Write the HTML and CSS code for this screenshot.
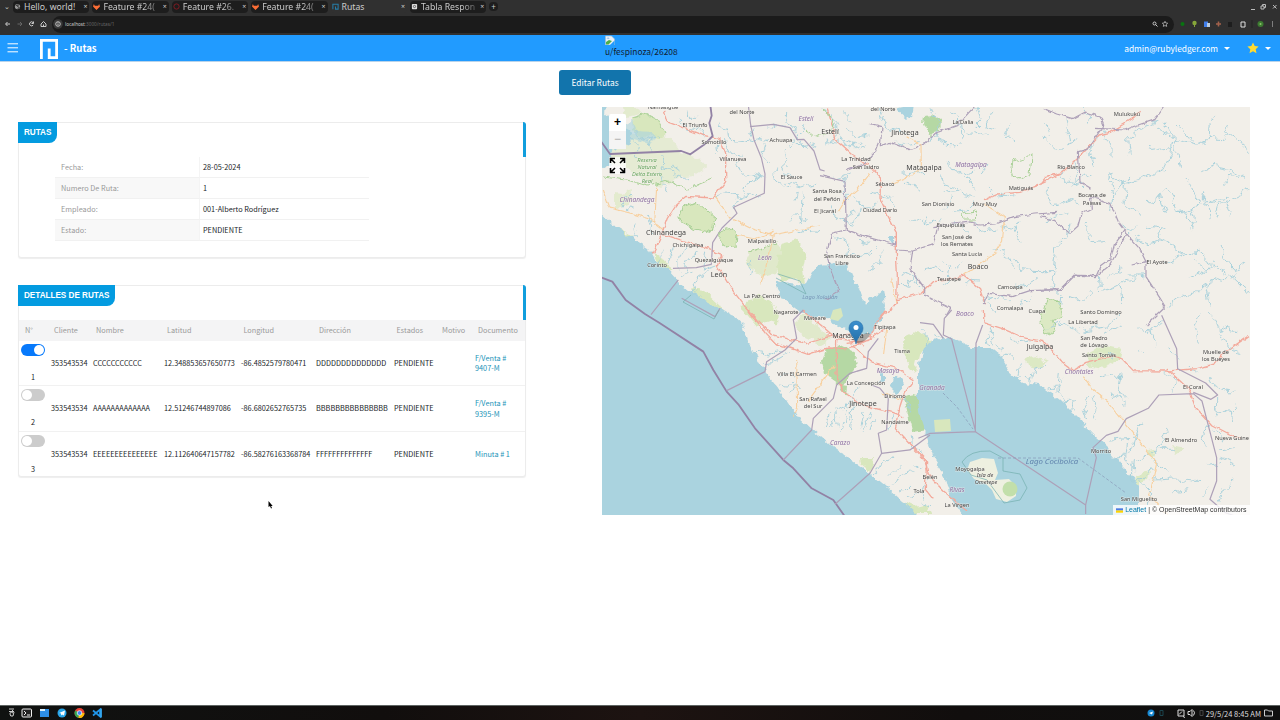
FILE: index.html
```html
<!DOCTYPE html>
<html lang="es">
<head>
<meta charset="utf-8">
<title>Rutas</title>
<link rel="stylesheet" href="styles.css">
</head>
<body>
<div class="tabs">
  <span class="tab-menu">⌄</span>
  <div class="tab"><svg class="fav" viewBox="0 0 8 8"><circle cx="4" cy="4" r="3" fill="#999"/><path d="M2 3l3-1-1 2 2 1-2 2" fill="none" stroke="#222"/></svg><b>Hello, world!</b><i>×</i></div>
  <div class="tab"><svg class="fav" viewBox="0 0 8 8"><path d="M1 1l1 2h4l1-2 1 3-4 4-4-4z" fill="#fc6d35"/></svg><b class="fade">Feature #24(</b><i>×</i></div>
  <div class="tab"><svg class="fav" viewBox="0 0 8 8"><circle cx="4" cy="4" r="3" fill="none" stroke="#8c1b24"/></svg><b class="fade">Feature #26.</b><i>×</i></div>
  <div class="tab"><svg class="fav" viewBox="0 0 8 8"><path d="M1 1l1 2h4l1-2 1 3-4 4-4-4z" fill="#fc6d35"/></svg><b class="fade">Feature #24(</b><i>×</i></div>
  <div class="tab active"><svg class="fav" viewBox="0 0 8 8"><path d="M1 7V1.500h6V7H4V4" fill="none" stroke="#267da8" stroke-width="1.200"/></svg><b>Rutas</b><i>×</i></div>
  <div class="tab"><svg class="fav" viewBox="0 0 8 8"><rect x="1" y="1" width="6" height="6" rx="1" fill="#ddd"/><circle cx="4" cy="4" r="1.300" fill="none" stroke="#555"/></svg><b class="fade">Tabla Respon</b><i>×</i></div>
  <span class="plus">+</span>
  <svg class="winctl" viewBox="0 0 30 8"><g fill="none" stroke="#bbb"><path d="M2 6.500h4M12 3h3v3h-3zM13.500 3V1.500h3v3H15M24 2l3.500 3.500M27.500 2L24 5.500"/></g></svg>
</div>
<div class="address">
  <svg class="navicons" viewBox="0 0 50 10"><g fill="none" stroke="#ccc"><path d="M10 5H6M7.500 3L5.500 5l2 2M33 3.500A2 2 0 1 0 33.200 6M33.500 2.500V4.500h-2"/><path d="M41 5l2.500-2.500L46 5v2.500h-5zM43.500 7.500V5.500"/><path stroke="#666" d="M17.500 5h4M20 3l2 2-2 2"/></g></svg>
  <div class="url"><svg viewBox="0 0 10 10"><circle cx="5" cy="5" r="4.800" fill="#3a3a3a"/><circle cx="5" cy="5" r="2.300" fill="none" stroke="#ddd" stroke-width=".8"/><path d="M5 4.500v2M5 3.300v.8" stroke="#ddd" stroke-width=".8"/></svg><span><em>localhost</em>:3000/rutas/1</span>
    <svg class="urlend" viewBox="0 0 18 8"><circle cx="4.500" cy="3.500" r="1.500" fill="none" stroke="#ccc"/><path d="M5.500 4.500L7.500 6.500" stroke="#ccc"/><path d="M15 1.300l.8 1.700 1.900.2-1.400 1.300.4 1.900L15 5.500l-1.700.9.400-1.900-1.400-1.300 1.900-.2z" fill="none" stroke="#ccc" stroke-width=".7"/></svg></div>
  <svg class="ext" viewBox="0 0 102 10"><circle cx="4.500" cy="5" r="2" fill="#087410"/><circle cx="16.500" cy="4" r="2.200" fill="#86a63a"/><path d="M16.500 5v3" stroke="#86a63a"/><path d="M26 2.500h4V8h-4z" fill="#3f7dea"/><path d="M29 4h3v4h-3z" fill="#bcd"/><path d="M38 5h5M40.500 2.500v5" stroke="#a2614b" stroke-width="1.600"/><path d="M50 3h4v5h-4z" fill="#1d1d1d"/><path d="M63 3h4v5h-4z" fill="none" stroke="#ddd"/><path d="M74 1v8" stroke="#222"/><circle cx="82.500" cy="5" r="3" fill="#3d7b31"/><circle cx="82.500" cy="5" r="1" fill="#8cc56a"/><path d="M94.500 2.500v1M94.500 4.500v1M94.500 6.500v1" stroke="#ccc"/></svg>
</div>
<header class="navbar">
  <svg class="burger" viewBox="0 0 12 10"><path d="M.5.800h10.500M.5 4.800h10.500M.5 8.800h10.500" stroke="#fff" stroke-width="1" fill="none"/></svg>
  <svg class="logo" viewBox="0 0 18 20"><path d="M1.400 20V1.400h15.200v17.200H9.200V9.500" fill="none" stroke="#fff" stroke-width="2.800"/></svg>
  <h1>- Rutas</h1>
  <div class="avatar"><svg viewBox="0 0 10 10"><path d="M.5 1h6l3 3v6h-9z" fill="#e8f0f8" stroke="#a9bcc9" stroke-width=".6"/><path d="M1 9.500V7l3-2 3 1-3.500 3.500z" fill="#4fae49"/><path d="M1.500 3.500q2-2 3 .5z" fill="#8cb9e8"/><path d="M5 10l4.500-4.500V10z" fill="#219bff"/></svg><span>u/fespinoza/26208</span></div>
  <div class="user"><span>admin@rubyledger.com</span><i class="caret"></i><svg class="star" viewBox="0 0 12 12"><path d="M6 .5l1.700 3.600 3.900.5-2.900 2.700.8 3.900L6 9.300l-3.500 1.900.8-3.900L.4 4.600l3.900-.5z" fill="#ffdb32"/></svg><i class="caret"></i></div>
</header>
<main class="page">
  <button class="edit">Editar Rutas</button>
  <div class="columns">
    <section class="left">
      <article class="card">
        <h2>RUTAS</h2><span class="accent"></span>
        <dl class="info">
          <dt>Fecha:</dt><dd>28-05-2024</dd>
          <dt>Numero De Ruta:</dt><dd>1</dd>
          <dt>Empleado:</dt><dd>001-Alberto Rodríguez</dd>
          <dt>Estado:</dt><dd>PENDIENTE</dd>
        </dl>
      </article>
      <article class="card details">
        <h2>DETALLES DE RUTAS</h2><span class="accent"></span>
        <div class="row head"><span>N°</span><span>Cliente</span><span>Nombre</span><span>Latitud</span><span>Longitud</span><span>Dirección</span><span>Estados</span><span>Motivo</span><span>Documento</span></div>
        <div class="row"><span class="num"><i class="switch on"></i>1</span><span>353543534</span><span>CCCCCCCCCCC</span><span>12.348853657650773</span><span>-86.4852579780471</span><span>DDDDDDDDDDDDDD</span><span>PENDIENTE</span><span></span><a>F/Venta #<br>9407-M</a></div>
        <div class="row"><span class="num"><i class="switch"></i>2</span><span>353543534</span><span>AAAAAAAAAAAAA</span><span>12.51246744897086</span><span>-86.6802652765735</span><span>BBBBBBBBBBBBBBB</span><span>PENDIENTE</span><span></span><a>F/Venta #<br>9395-M</a></div>
        <div class="row"><span class="num"><i class="switch"></i>3</span><span>353543534</span><span>EEEEEEEEEEEEEEE</span><span>12.112640647157782</span><span>-86.58276163368784</span><span>FFFFFFFFFFFFFF</span><span>PENDIENTE</span><span></span><a>Minuta # 1</a></div>
      </article>
    </section>
    <section class="map">
      <svg class="tiles" viewBox="602 107 647.5 408" preserveAspectRatio="none">
        <defs>
          <linearGradient id="pin" x2="0" y2="1"><stop stop-color="#3b8fce"/><stop offset="1" stop-color="#236da5"/></linearGradient>
          <filter id="meander" x="-5%" y="-5%" width="110%" height="110%" color-interpolation-filters="sRGB"><feTurbulence type="fractalNoise" baseFrequency=".035" numOctaves="3" seed="4"/><feDisplacementMap in="SourceGraphic" scale="34" xChannelSelector="R" yChannelSelector="G"/></filter>
          <filter id="bend" x="-5%" y="-5%" width="110%" height="110%" color-interpolation-filters="sRGB"><feTurbulence type="fractalNoise" baseFrequency=".05" numOctaves="2" seed="7"/><feDisplacementMap in="SourceGraphic" scale="14" xChannelSelector="R" yChannelSelector="G"/></filter>
          <filter id="coast" x="-5%" y="-5%" width="110%" height="110%" color-interpolation-filters="sRGB"><feTurbulence type="fractalNoise" baseFrequency=".12" numOctaves="3" seed="2"/><feDisplacementMap in="SourceGraphic" scale="8" xChannelSelector="R" yChannelSelector="G"/></filter>
        </defs>
        <rect x="602" y="107" width="648" height="408" fill="#f2efe9"/>
        <!-- woodland and reserves -->
        <g class="wood" filter="url(#coast)">
          <path d="M632 118l14-4 14 7 6 12-7 6-9-4-8 3-9-9z"/><path d="M603 142l26-5 18-10 10 9 14 2 10 15 18 5 8 10-14 8-20 3-12 8-16-7-20-12-22-5z" opacity=".5"/>
          <path d="M682 207l15-6 19 17-3 15-18-4-16-11z"/><path d="M719 232l12-3 7 6-1 10-11 1-7-6z"/>
          <path d="M749 252l18-6 10-4 5 14-6 18-13 3-14-9-5-6z" opacity=".7"/><path d="M782 244l16-4 8 14-3 14 2 18-12-8-13 3-3-14z"/>
          <path d="M925 116l9-2 7 6-1 12-12 2-4-10z" fill="#b5d8a4"/><path d="M614 193l10 1 8-3-2 12-16 6z" opacity=".6"/>
          <path d="M617 228l13 7 4 13-14-9zM653 254l13 6 5 10-12-3z"/><path d="M690 288l14 2 16 15 3 8-19-8zM738 306l12-6 10-6 19 19-1 12-13-4-8 6-12-15z"/>
          <path d="M797 317l9-2 17 16 9 9-9 5-19-9-8-10z" opacity=".7"/><path d="M826 349l15-4 16 8-1 14-14 19-17-12-3-12z" fill="#b5d8a4"/>
          <path d="M841 384l7 1-1 12-7-7zM904 397l11-2 13 4-2 31-14 2z" fill="#b5d8a4"/>
          <path d="M904 338l15-7 13 10-14 14-4 18-9-12z"/>
          <path d="M1046 298l12 4 5 14-11 5 4 9-10 5-6-14zM1025 359l12-3 11 6-8 7-12-2zM1088 353l16-8 17 4-2 10-16 10-16-3zM1135 477l15-6-2 10-12 3zM1148 450l6-1 3 5-6 3z" opacity=".85"/>
          <path d="M978 350l8-2 3 8-6 3zM1171 445l14 3-8 6z" opacity=".7"/><path d="M860 458h14l-3 14-10-8zM902 501l10 5 14-2 5 10h-20z"/>
          <path d="M623 107l13 0 6 7-17 3z" opacity=".6"/>
        </g>
        <g class="water" filter="url(#coast)">
          <path d="M598 211l15 14 17 12 17 10 8 15 12 7 13 14 20 15 20 10 12 7 11 10 5 17 14 23 11 17 12 15 15 21 12 11 16 14 19 14 23 16 17 14 30 28v10H590z"/>
          <path d="M598 100h9l-1 15 12 5 4 8 10 5-2 9-12 8-8-3 2 17-7 3-7-3z"/><path d="M622 126l10-5 5 10 16 1 4 6-11 5-12-4-7 3z" opacity=".6"/>
          <path d="M820 266l15-2 13 1 4 10 8 17 5 14 8-9 10-7 2 15-2 10-13 18-10 0-15-3-10-4-7-9-13 1-15-6-15-12-7-10-2-10 14 3 15 2 7-13z"/>
          <path d="M918 371l4-20 8-9 11-5 13 1 16 9 20 0 10 8 10 17 13 11 17 2 20 15 17 17 16 17 14 13 16 20 16 18v42H970l-20-30-5-20-12-20-7-23-6-18-2-12z"/>
          <path d="M903 103h11l-2 13-7 2-8-7zM893 379l7-2 5 5-2 8-6 3-6-6zM879 373l4 0 0 8-4 1zM889 236l6 0 0 7-6-2z"/>
        </g>
        <path d="M1139 482l8 4v29h-8z" fill="#f2efe9"/>
        <g class="wood"><path d="M833 310l8-2 2 8-5 5-8-2zM934 420l16-1 1 12-16 1z"/><path d="M970 462l12-4 12 1 4 14-3 7 14-1 7 7 0 10-9 6-11-3-4-9-6-6-12-5-7-9z" fill="#eef0e0"/><circle cx="1010" cy="489" r="7.500" fill="#c2dfaa"/></g>
        <!-- rivers -->
        <g class="river" filter="url(#meander)" transform="translate(600 105) scale(.3333)">
          <path d="M100 78l24 22 31-10 20 16M90 100l22 22-3 27 18 17M150 95l-8 29 14 16M185 160l6 30 29-12 21 15M188 205l-7 29 20 28M210 190l20 24 17 0M240 210l21 15M240 40l20 30 40 4 18 25M265 18l5 19 20 0M355 60l27 20 4 23 60 5 17-38M365 112l-17 10 2 24M372 108l20 38 30 5M408 162l15 49 32-2 39 9M440 110l42-10 25 8M492 115l-8 27 22 25M480 210l-43 33-12 35-52-8-22 6M428 277l33-10 24 16M427 280l-23 14-7 24M560 15l-2 40 30 21 4 32 31 19M505 60l50 8M583 108l-24 32 5 27-20 19 13 20 37 12M614 58l-22 48M530 190l-12 29 19 17 35 16M555 234l53 15 45-14M593 256l-8 34M580 120l45-4 28 14M570 350l20-24 20 30 12-23M605 355l4-86M660 380l-40-5-30 13M190 433l-10 31-21 17M220 427l-19 43M262 426l-29 47 2 23M297 440l-36 26-5 30M320 440l-10 56 39-14M330 500l-40 25-15 39 28 9M240 510l34-14M455 466l-10 44M90 270l-30 34M75 310l35 5M145 330l10 33-4 29M102 352l8 43"/>
          <path d="M680 25l33 32 13 45 42 12M718 82l-36 35M730 20l30 30M752 210l-40 12-15-17M795 130l-25-12M740 212l-5 48 14 24M820 265l32 7 41 25M875 280l-19-18M766 320l-34 18"/>
        </g>
        <g class="river" filter="url(#meander)" transform="translate(820 105) scale(.3333)">
          <path d="M15 10l25 31 11 35M20 105l45 5 35 18M75 60l31 38 39-10M178 13l22 61 58 10M230 105l30 15 45-4M330 13l30 44-16 37-19 12M345 92l35 29 35 2M395 15l27 39 4 44-13 25M426 70l42 19 35-6M470 10l14 37-20 20M520 12l-22 47 34 10M570 55l-13 37 25 22M380 170l35 40 45-11M365 212l6 25 38 10 20 25 38 7M370 265l42-6M389 278l-17 35M442 212l30 45M502 171l-18 39M510 256l25 17 45-7M400 320l35-5 25-25M458 350l25 30 46-8M400 345l38 31 5 34M245 205l44-5 26 12M260 235l34 8 14 20M270 340l45 16 44-14M312 358l10-28M100 280l42 28 30-14M125 305l-10 31-24 13M35 306l27 42 39 10M50 395l39 29-8 31M115 405l42 14M90 455l60-8 20-20M142 498l34-26 14-39M240 500l45 12 15 42M235 540l30 3 14-30M310 495l38-9 23 12M365 470l24 18-4 40-20 12M425 470l-26 26M430 530l50 4M545 365l40 10 12 35M520 430l34 10 27 45M600 350l-22 37M580 460l24 34 50 3M490 590l45-20 40 20M580 540l36 5 38-30M500 595l30 25M600 600l31-19"/>
        </g>
        <g class="river" filter="url(#meander)" transform="translate(1040 105) scale(.3333)">
          <path d="M5 95l35 33 40 5M18 60l10 35M78 40l12 80 30-20M130 15l20 24-12 22M165 95l-20 45 23 40M190 80l20 40 0 38M95 165l19 30-25 52M65 190l22 44 45 5M100 230l50-18M15 250l22 55 54-20M90 287l30 12M136 348l3 38 17 30 42-3M90 350l-7 44-35 30-9 66M15 360l25-30 42-11M265 155l-5-52 30-24 62-26M355 70l20 17 28 16 10 50 12 35M370 50l30 46-8 54-23 49-52 18-64 23M403 100l70 17 34-15 3-47 20-15M410 53l24 26 32 36M318 118l35 15 41-5M485 120l20-20 43 4 12-18 48 28 14 33M552 60l15 30M205 205l54 35-4 60 33 17 17 20M209 210l9 55-3 51M220 275l33-37 14-26M320 292l22 4 20-28 17-18 17 28 19 42 45-10 23-16 38-3 32 4 19-10 56-31M360 270l16 57M412 318l28 4 20 51M455 310l10 42-17 18M485 295l24 21-2 30M510 290l50-12M440 220l15 25 26 52M495 258l-6 32M484 200l35-16 48 10 53 24M620 220l-44-11-25 31M543 300l-12 38M558 290l16 45M322 360l40 12 14-8M370 370l-16 28 50 28 25 18 45-5 35 32 60 39 40 39 17 10M320 420l52-10M434 450l-59 23M550 420l0 35 30 36 41-13M440 520l64-20 15-19M510 500l-44-32M510 605l-8-48 6-38 45 10 33-29M260 510l59 0M175 515l3 35M180 560l36-11 50-25 57-14M270 380l-22-20M260 395l25-28M285 395l45 22M200 520l44-30M0 500l42 0-5 48 25 26-3 27M380 610l50-38 28-7 42-29M90 580l40 9 31-24M240 535l5 56"/>
        </g>
        <g class="river" filter="url(#meander)" transform="translate(600 310) scale(.3333)">
          <path d="M460 125l45 10 30-12 34 8M490 155l36-3 33-19M540 200l18-14 28 9M535 222l29 3 25-6M570 255l10-24 26 3M780 230l-33 50-35 20M690 300l-14 52M705 295l10 52M740 280l-14 80M760 270l-5 90M770 275l-26 58M790 300l-10 55M810 305l-20 60M690 360l27-40M820 330l-10 30M875 265l38-2 14 45M880 310l-20 55M825 490l29-39 30-11M870 500l40-40M885 530l14-33 44-12M940 465l22 10M970 430l-32-20-4-34M900 550l28-29M930 560l30-15"/>
        </g>
        <g class="river" filter="url(#meander)" transform="translate(920 310) scale(.3333)">
          <path d="M210 50l10 48 30 15M270 80l25 16 40-6M240 140l15-8 20 17M298 160l-7 38M310 195l31 15M335 215l10-39 30-10M380 235l36-5 15-27M415 190l-4 52M415 240l15 35 35-2M470 270l-18 24 12 14M500 330l-12-35 18-34M520 250l15 49-10 30M200 70l12 58M0 65l23 22-4 23M40 65l35 22M380 60l35-26 22 15M480 65l-40-16M550 70l55-24M580 145l-12-19M540 200l38-10 29 14M570 260l28-6 15 30M600 190l-6 44 26 34M680 130l-25-12M650 50l40 10 44-19M690 60l12 49M840 10l-14 39 12 49M870 10l24 40 55 15M900 60l20 52 38 10M780 145l-31-32M730 185l34 20-10 47M830 190l-22-24M870 195l20 40 55 9M890 260l0 32 41 14 4 31M905 295l-20 30M950 290l-18 25M860 345l-17 41 22 34M880 355l30 37M660 340l-20 67-20 30-38 7M570 390l61-5M620 400l-6 50 34 30M745 350l-17 49-28 33-63 20-3 55 39-2 20-30M700 455l48 26M720 415l51 0M655 510l37 35-4 37M700 510l70-3 66 8M760 545l50-6M940 510l-27 24-18 45M870 530l-30 30M900 420l47-7M905 445l40 20M900 460l-43 6M490 60l70-9 40-39M30 590l-25-10M20 510l-12 60"/>
        </g>
        <!-- highways -->
        <g class="road" filter="url(#bend)" transform="translate(600 105) scale(.3333)">
          <path class="minor" d="M7 255l20 54 60 14 80 25M345 275l45 65 62 30 66 20 60-12 82-16M170 245l-6 110 27 20M405 390l60 12 58-25M520 390l-12 58-26 90"/>
          <path d="M190 15l10 35 50 19 60 22 50 10 17 46 0 80-36 52-83-5-31 26-25 40-24 65-18 40M190 388l100 32 75 28-13 35 40 65 41 54 29 30 51 56 106 28 66-20 79-11"/>
        </g>
        <g class="road" filter="url(#bend)" transform="translate(820 105) scale(.3333)">
          <path class="minor" d="M260 95l43 24 1 70-26 20-60 26M150 205l-36 48-36 30-22 36M430 510l40-25 55-40 23-40 5-70-40-25-20-15M215 520l12 68"/>
          <path d="M22 10l15 53 7 40 50 45 48 30 40 42-2 60 25 55 24 45 0 60 3 70-2 80-22 34M230 585l75-21 35-34 45-5 49-13 45 39 15 46M492 287l42-20 66-5 60-23 20-25 43-10M660 235l69-32 60-58 48-55 33-8 66-40 26-23"/>
        </g>
        <g class="road" filter="url(#bend)" transform="translate(600 310) scale(.3333)">
          <path class="minor" d="M590 150l3 140-13 30M860 55l-9 80M845 250l60 18M700 170l-75 102"/>
          <path d="M610 0l60 52 41 34 46 6 38 16M445 0l52 68 30 32 97 33 60-19 60 2 64-27 29-62 21-24M710 90l-2 100 20 54 60 42 83 20 39 14M755 105l55 50 80 20 52 36-29 39-13 39-14 67 40 43 54 54-4 85 24 30M740 100l64-8 50-37"/>
        </g>
        <g class="road" filter="url(#bend)" transform="translate(920 310) scale(.3333)">
          <path class="minor" d="M490 200l30 40 44 36 72 89 74 95-21 95 52 59"/>
          <path d="M190 0l2 38 55 18 61 26 63 13 32 33 28 32 30 22 37-25 84-20 25 10 33 35 105 1 86-7 53-14 24-30 79-55M740 176l66 60 20 55 50 54 58 30 30 12M0 440l16 18 10 38 45 47 70 60"/>
        </g>
        <!-- department borders -->
        <g class="border" transform="translate(600 105) scale(.3333)">
          <path class="thick" d="M0 105l30 42 214-9 27 10 43-30 24-25-10-39 7-22-4-32M0 516l37 14 40 55 58 42 45 28 130 85 30 55 40 65 35 38 50 72 85 95 30 25 55 60 65 35 35 50 32 42"/>
          <path d="M445 0l7 60 10 44 22 54 11 49-2 58-92 42 10 18-45 44-28 44-4 65-45 10-70 2M450 65l70-7 50 10 22 36 20-1 30 35 18 56 14 4M235 525l-82 104M245 580l100 55 15-25M550 1065l85-90 5-35 60-60 10-40 40-35 50-15 5-50 30-40M380 857l115-57 5-30 55-35 35-35-10-55 30-30M705 1198l105-93 35-60 85-10 60-45M845 1045l-10-60 25-10 5-95-25-30-25-10"/>
        </g>
        <g class="border" filter="url(#bend)" transform="translate(820 105) scale(.3333)">
          <path d="M0 212l75 17 4 145 55 20 92 26 2-10M75 375l-40 10-15 60 8 40 28 74-39 24M150 55l36 10-5 57 30-10 56 22 46-16 34-34 63-22 57-61M175 113l-12 31-35 35-50 17M228 435l50 3-8 51 44 62 0 20 78 39-12 20M278 438l62-20 15-60M490 600l15-35 70 10 55-18 93-4 38-42 68 1 14-31 30-22 10-40 35-46M340 365l100-13 40 8 45-3 56-22 66-8 62-5"/>
        </g>
        <g class="border" filter="url(#bend)" transform="translate(1040 105) scale(.3333)"><path d="M10 10l40 17 48 14 38-20 45 15 10 25-22 32-28 40-26 7 5 90 32 20M165 70l90 5 30-12 60-20 30-40M0 335l35 8 55 42 24-22 10-38 30-15-2-35 60 20 25 60 30 40 31 35 20 40-43 10M262 385l-52 95-44 35-60-5-44 44-62 2M318 465l0 50 43 66 15 25-56 54"/></g>
        <g class="border" transform="translate(920 310) scale(.3333)"><path d="M95 0l-22 25-3 50 25 12 72 278-136 5-36 15M188 45l-20 55-2 265 331 220 32-142-10-30 40-37 35-12 25-38 66-31 32-40 103-4 26 22 44 170 0 70-20 55 46 40 65 23 48 40M820 247l53 21 20-13-36-36-84-43-3-60-45-100M0 38l40 5 30 42M497 585l0 27"/></g>
        <g fill="none" stroke="#72afae" stroke-width=".7"><path d="M691 295l-8 7 31 17 5-9M776 278l30 16-6-13-22-7M962 462q8-12 28-11l13 7v13l17 3 7 14-7 12-16 3-17-23-16-5z"/><path d="M943 393l14 14 16 22M998 458h80l48 35" stroke-dasharray="3 2" stroke="#8898b8"/></g>
        <g class="park" filter="url(#coast)"><path d="M682 207l15-6 19 17-3 15-18-4-16-11zM719 232l12-3 7 6-1 10-11 1-7-6zM1012 161l20-5-2 19-11 5-9-7zM963 213l15-2-3 8-11 0zM1046 298l12 4 5 14-11 5 4 9-10 5-6-14zM822 110l12 9-3 14-16 5-10-8M603 177l25 3 20 6 20-5 20 8 14-6 10-4M749 252l18-6 10-4M632 118l14-4 14 7 6 12"/></g>
        <!-- place names -->
        <g class="label">
          <text x="663" y="109">Namasigüe</text><text x="695" y="127">El Triunfo</text><text x="714" y="144">Somotillo</text><text x="733" y="161">Villanueva</text><text x="742" y="114">del Norte</text><text x="781" y="142">Achuapa</text><text x="791.500" y="179">El Sauce</text><text x="827" y="193">Santa Rosa</text><text x="827" y="201">del Peñón</text><text x="825" y="213">El Jicaral</text><text x="883" y="111">del Norte</text><text x="963" y="124">La Dalia</text><text x="856" y="161">La Trinidad</text><text x="866" y="169">San Isidro</text><text x="885" y="186">Sébaco</text><text x="880" y="212">Ciudad Darío</text><text x="938" y="206">San Dionisio</text><text x="985" y="206">Muy Muy</text><text x="1021" y="190">Matiguás</text><text x="951" y="227">Esquipulas</text><text x="957" y="239">San José de</text><text x="957" y="246">los Remates</text><text x="967" y="256">Santa Lucía</text><text x="949" y="281">Teustepe</text><text x="1010" y="289">Camoapa</text><text x="1010" y="310">Comalapa</text><text x="1037" y="313">Cuapa</text><text x="842" y="258">San Francisco</text><text x="842" y="265">Libre</text>
          <text x="1127" y="116">Mulukukú</text><text x="1071" y="169">Río Blanco</text><text x="1092" y="197">Bocana de</text><text x="1092" y="205">Paiwas</text><text x="1157" y="264">El Ayote</text><text x="1101" y="314">Santo Domingo</text><text x="1083" y="324">La Libertad</text><text x="1094" y="340">San Pedro</text><text x="1094" y="347">de Lóvago</text><text x="1099" y="357">Santo Tomás</text><text x="1216" y="354">Muelle de</text><text x="1216" y="361">los Bueyes</text><text x="1193" y="389">El Coral</text><text x="1181" y="442">El Almendro</text><text x="1232" y="440" textLength="34">Nueva Guine</text><text x="1101" y="453">Morrito</text><text x="1139" y="501">San Miguelito</text>
          <text x="688" y="247">Chichigalpa</text><text x="762" y="243">Malpaisillo</text><text x="714" y="262">Quezalguaque</text><text x="657" y="267">Corinto</text><text x="762" y="298">La Paz Centro</text><text x="786" y="314">Nagarote</text><text x="815" y="320">Mateare</text><text x="885" y="329">Tipitapa</text><text x="902" y="353">Tisma</text><text x="797" y="376">Villa El Carmen</text><text x="813" y="401">San Rafael</text><text x="813" y="408">del Sur</text><text x="866" y="385">La Concepción</text><text x="895" y="398">Diriomo</text><text x="895" y="424">Nandaime</text><text x="919" y="493">Tola</text><text x="930" y="479">Belén</text><text x="957" y="507">La Virgen</text><text x="970" y="471">Moyogalpa</text><text x="985" y="477" class="isle">Isla de</text><text x="986" y="484" class="isle">Ometepe</text>
          <g class="town"><text x="666" y="235">Chinandega</text><text x="719" y="277">León</text><text x="830" y="134">Estelí</text><text x="905" y="135">Jinotega</text><text x="924" y="170">Matagalpa</text><text x="978" y="269">Boaco</text><text x="1040" y="349">Juigalpa</text><text x="848" y="338">Managua</text><text x="863" y="406">Jinotepe</text></g>
          <g class="region"><text x="637" y="202">Chinandega</text><text x="765" y="260">León</text><text x="806" y="121">Estelí</text><text x="971" y="167">Matagalpa</text><text x="965" y="316">Boaco</text><text x="888" y="373">Masaya</text><text x="932" y="390">Granada</text><text x="840" y="445">Carazo</text><text x="1079" y="374">Chontales</text><text x="957" y="492">Rivas</text><text class="lake small" x="820" y="299">Lago Xolotlán</text><text class="lake" x="1052" y="464">Lago Cocibolca</text></g>
          <g class="reserve"><text x="647" y="162">Reserva</text><text x="647" y="169">Natural</text><text x="647" y="176">Delta Estero</text><text x="647" y="183">Real</text></g>
        </g>
        <ellipse cx="863" cy="338" rx="8" ry="3" fill="#222" opacity=".35" transform="rotate(-35 863 338)"/>
        <path d="M856 344c-1-7-7-10-7-16a7 7 0 0 1 14 0c0 6-6 9-7 16z" fill="url(#pin)" stroke="#2870a9" stroke-width=".6"/><circle cx="856" cy="327.500" r="2.500" fill="#fff"/>
      </svg>
      <div class="zoomer"><span>+</span><span class="off">−</span></div>
      <svg class="full" viewBox="0 0 17 17"><rect width="17" height="17" fill="#fff" opacity=".75"/><g fill="none" stroke="#000" stroke-width="1.600"><path d="M1.500 6V1.500H6M2 2l4 4M11 1.500h4.500V6M15 2l-4 4M1.500 11v4.500H6M2 15l4-4M15.500 11v4.500H11M15 15l-4-4"/></g></svg>
      <div class="credit"><svg viewBox="0 0 8 5"><path fill="#4c7be1" d="M0 0h8v2.500H0z"/><path fill="#ffd500" d="M0 2.500h8V5H0z"/></svg><a>Leaflet</a><span>| © OpenStreetMap contributors</span></div>
    </section>
  </div>
</main>
<svg class="pointer" viewBox="0 0 5 8"><path d="M.5 0v6l1.500-1 1 2.500 1-.5-1-2h1.700z" fill="#000"/></svg>
<footer class="taskbar">
  <svg class="apps" viewBox="0 0 110 14"><path d="M9 3h5M9 5.500h4M12 4l2 2-1 4q-3 1-3-2t3-1" fill="none" stroke="#ccc"/><rect x="22" y="3" width="9.500" height="8" rx="1" fill="#222" stroke="#eee"/><path d="M24 5l2 2-2 2M27 9h3" fill="none" stroke="#eee"/><path d="M40 3h9v8h-9z" fill="#2d8ee8"/><path d="M40 3h5v2h-5z" fill="#d9f0ff"/><circle cx="62" cy="7" r="4.500" fill="#28a5e8"/><path d="M59 7l6-2.500-1 5-2-1-1 1v-2z" fill="#fff"/><circle cx="79.500" cy="7" r="5" fill="#e94235"/><path d="M79.500 7l-4.300-2.500a5 5 0 0 0 3.300 7.400z" fill="#34a853"/><path d="M79.500 7h5a5 5 0 0 1-6 5z" fill="#fbbc05"/><circle cx="79.500" cy="7" r="2.300" fill="#4285f4" stroke="#fff" stroke-width=".7"/><path d="M93 4.500l7 6v-7l-7 6" fill="none" stroke="#2196e9" stroke-width="1.700"/><path d="M101 2.500v9" stroke="#35a9f2" stroke-width="1.800"/></svg>
  <svg class="tray" viewBox="0 0 60 14"><circle cx="5" cy="7" r="3.500" fill="#1687d0"/><path d="M3 7l4-1.500-1 3z" fill="#fff"/><path d="M14 4.500h3v5h-3z" fill="none" stroke="#1b454e"/><path d="M32 4h6v6h-6zM33 8.500l3-3M37 10.500l2 1" fill="none" stroke="#ddd"/><path d="M42 5.500h2l2-2v7l-2-2h-2zM47.500 4.500q2 2 0 5" stroke="#ddd" fill="none"/><path d="M54 4.500h3v5h-3z" fill="none" stroke="#444"/></svg>
  <span>29/5/24 8:45 AM</span>
  <svg class="folder" viewBox="0 0 9 10"><path d="M.5 2h3l1 1h4v5h-8z" fill="none" stroke="#ccc"/></svg>
</footer>
</body>
</html>
```
FILE: styles.css
```css
* { box-sizing: border-box; }
body { margin: 0; width: 1280px; height: 720px; overflow: hidden; display: flex; flex-direction: column; background: #fff; color: #212529; font-family: "Noto Sans CJK SC", "Open Sans", sans-serif; font-size: 7.300px; }
svg { display: block; flex: none; }
i, em { font-style: normal; }
.tabs { height: 13px; background: #303030; display: flex; align-items: center; color: #ccc; font-family: "Noto Sans", sans-serif; overflow: hidden; flex: none; }
.tab-menu { width: 13px; text-align: center; font-size: 7px; line-height: 8px; }
.tab { width: 76.400px; height: 12px; margin-right: 3px; padding: 0 2px 0 1px; border-radius: 4px; background: #1d1d1d; display: flex; align-items: center; gap: 3px; flex: none; }
.tab.active { background: #303030; }
.tab b { flex: 1; font-weight: 400; font-size: 8.700px; line-height: 12px; white-space: nowrap; }
.tab .fade { -webkit-mask-image: linear-gradient(90deg, #000 70%, rgba(0,0,0,.25) 100%); mask-image: linear-gradient(90deg, #000 70%, rgba(0,0,0,.25) 100%); }
.tab i { font-size: 7px; }
.fav { width: 7px; height: 7px; }
.plus { font-size: 8px; background: #1d1d1d; border-radius: 4px; padding: 0 2px; line-height: 9px; }
.winctl { width: 30px; height: 8px; margin-left: auto; margin-right: 1px; }
.address { height: 22px; background: #303030; display: flex; align-items: center; flex: none; }
.navicons { width: 50px; height: 10px; margin-right: 2px; }
.url { width: 1122px; height: 17px; border-radius: 9px; background: #1b1b1b; display: flex; align-items: center; gap: 2px; padding-left: 1px; font: 4.700px "Noto Sans", sans-serif; color: #666; }
.url > svg:first-child { width: 10px; height: 10px; }
.url em { color: #ccc; }
.url .urlend { width: 18px; height: 8px; margin-left: auto; margin-right: 6px; }
.ext { width: 102px; height: 10px; margin-left: 4px; }
.navbar { height: 27px; background: #219bff; border-bottom: 1px solid #b8d3ea; color: #fff; display: flex; align-items: center; flex: none; }
.burger { width: 12px; height: 10px; margin-left: 7px; }
.logo { width: 18px; height: 20px; margin-left: 21px; margin-top: 1px; }
.navbar h1 { margin: 0 0 0 6px; width: 34px; font-size: 9.600px; line-height: 14px; white-space: nowrap; }
.avatar { margin-left: 507px; height: 26px; color: #123; font-size: 8.450px; line-height: 13px; padding-top: 0; }
.avatar svg { width: 10px; height: 10px; }
.avatar span { display: block; }
.user { margin-left: auto; display: flex; align-items: center; font-size: 8.350px; line-height: 14px; }
.caret { border: 3px solid transparent; border-top: 3.500px solid #fff; border-bottom: 0; margin: 0 9px 0 6px; }
.star { width: 12px; height: 12px; margin-left: 8px; }
.star + .caret { margin-left: 6px; }
.page { flex: 1; padding: 8px 0 0 18px; display: flex; flex-direction: column; }
.edit { margin-left: 541px; width: 72px; height: 25px; border: 0; border-radius: 3px; background: #1274ac; color: #fff; font: 8.400px/12px "Noto Sans CJK SC", sans-serif; padding: 0 0 1px; }
.columns { margin-top: 12px; display: flex; gap: 76px; }
.left { width: 508px; padding-top: 15px; display: flex; flex-direction: column; gap: 27px; }
.card { position: relative; height: 136px; border: 1px solid #ececec; border-radius: 3px; box-shadow: 0 1px 1px #eee; background: #fff; }
.card h2 { margin: -1px 0 0 -1px; display: inline-block; height: 21px; padding: 0 6px 0 6px; background: #039be0; color: #fff; border-radius: 0 0 8px 0; font: bold 8.150px/22px "Liberation Sans", sans-serif; vertical-align: top; }
.accent { position: absolute; right: -1px; top: -1px; width: 3px; height: 35px; background: #119edd; border-radius: 0 3px 0 0; }
.info { margin: 13.500px 0 0 36px; width: 314px; display: grid; grid-template-columns: 145px 169px; }
.info dt, .info dd { margin: 0; height: 21px; line-height: 21px; border-bottom: 1px solid #f1f1f1; }
.info dt { padding-left: 6px; color: #999; border-right: 1px solid #f4f4f4; }
.info dt:nth-of-type(even) { background: #f8f8f8; }
.info dd { padding-left: 3px; }
.details { height: 192px; }
.row { height: 45.400px; display: grid; grid-template-columns: 29px 42px 71px 77px 75px 78px 48px 33px 53px; align-items: center; border-bottom: 1px solid #f1f1f1; line-height: 10.500px; white-space: nowrap; }
.row:last-child { border: 0; }
.row > * { padding-left: 3px; }
.row a { color: #2193b8; }
.head { height: 21px; margin-top: 14px; background: #f4f4f5; color: #999; border: 0; }
.head > * { padding-left: 6px; }
.head > :nth-child(5), .head > :nth-child(7) { padding-left: 5.500px; }
.head > :nth-child(8) { padding-left: 3px; }
.row .num { height: 100%; padding: 3px 3px 3px 2px; display: flex; flex-direction: column; justify-content: space-between; text-align: center; }
.switch { width: 24px; height: 12px; border-radius: 6px; background: #ccc; display: flex; padding: 1px; }
.switch::before { content: ""; width: 10px; height: 10px; background: #fff; border-radius: 50%; }
.switch.on { background: #0779fb; justify-content: flex-end; }
.map { width: 647.500px; height: 408px; position: relative; }
.tiles { width: 100%; height: 100%; }
.wood { fill: #d8e7bd; }
.water { fill: #aad3df; }
.river { fill: none; stroke: #a6d0da; stroke-width: 2.800; stroke-linejoin: round; }
.road { fill: none; stroke: #f3a99b; stroke-width: 4; stroke-linejoin: round; }
.road .minor { stroke: #f8cf9d; stroke-width: 3.200; }
.border { fill: none; stroke: #ada0b8; stroke-width: 3.600; stroke-linejoin: round; }
.border .thick { stroke: #9282a5; stroke-width: 5.500; }
.park { fill: none; stroke: #a9d096; stroke-width: 1; }
.label { font: 5.650px "Noto Sans", sans-serif; text-anchor: middle; fill: #444; stroke: #f5f2ed; stroke-opacity: .6; stroke-width: 1px; paint-order: stroke; }
.label .town { font-size: 7.100px; }
.label .region { font-size: 6.500px; font-style: italic; fill: #8d70a3; }
.label .lake { font-size: 7.800px; fill: #6083ad; stroke: none; }
.label .lake.small { font-size: 5.800px; fill: #7897b8; }
.label .isle { font-style: italic; }
.label .reserve { font-style: italic; fill: #65a45e; }
.zoomer { position: absolute; left: 7px; top: 7px; width: 17px; height: 35px; background: #fff; border-radius: 2px; font: bold 12px/17px "Liberation Sans", sans-serif; text-align: center; color: #000; }
.zoomer span { display: block; height: 17px; }
.zoomer .off { background: #f4f4f4; color: #aaa; height: 18px; font-weight: 400; }
.full { position: absolute; left: 7px; top: 50px; width: 17px; height: 17px; }
.credit { position: absolute; right: 0; bottom: 0; height: 10px; padding: 0 3px; background: rgba(255,255,255,.8); display: flex; align-items: center; gap: 2px; font: 6.970px/10px "Liberation Sans", sans-serif; color: #333; white-space: nowrap; }
.credit svg { width: 7px; height: 5px; }
.credit a { color: #0078a8; }
.pointer { position: absolute; left: 268px; top: 501px; width: 5px; height: 8px; }
.taskbar { height: 15px; background: linear-gradient(90deg, #101211, #110e0d 30%, #1d1311 50%, #110e0d 75%, #101010); border-top: 1px solid #5e6462; display: flex; align-items: center; color: #ddd; font-size: 7.500px; line-height: 13px; flex: none; }
.apps { width: 110px; height: 14px; }
.tray { width: 60px; height: 14px; margin-left: auto; }
.folder { width: 9px; height: 10px; margin: 0 7px 0 3px; }
```
